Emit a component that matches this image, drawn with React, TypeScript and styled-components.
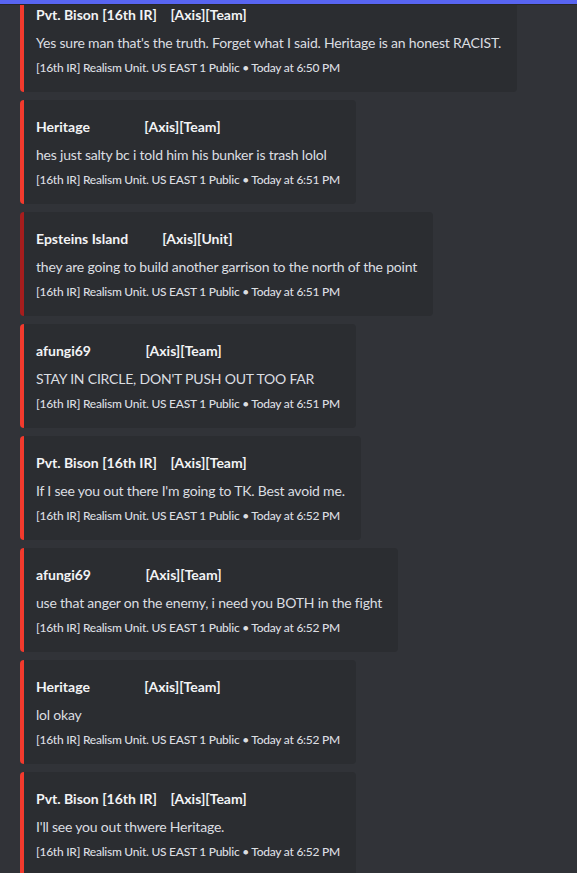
import React from "react";
import styled, { createGlobalStyle } from "styled-components";

const Global = createGlobalStyle`
  html, body { margin: 0; padding: 0; background: #313338; }
  body { overflow: hidden; font-family: Lato, "Noto Sans", sans-serif; }
`;

const Page = styled.div`
  position: relative;
  height: 873px;
  overflow: hidden;
  background: #313338;
`;

const TopBar = styled.div`
  position: absolute;
  top: 0;
  left: 0;
  right: 0;
  height: 4px;
  background: #5865f2;
  border-bottom: 1px solid #26272b;
  z-index: 2;
`;

const List = styled.div`
  display: flex;
  flex-direction: column;
  align-items: flex-start;
  gap: 8px;
  margin-top: -12px;
  padding-left: 20px;
`;

const Embed = styled.div<{ $accent: string }>`
  display: grid;
  row-gap: 8px;
  padding: 16px 16px 16px 12px;
  background: #2b2d31;
  border-left: 4px solid ${(p) => p.$accent};
  border-radius: 4px;
`;

const Title = styled.div`
  font-size: 14px;
  line-height: 22px;
  font-weight: 700;
  color: #f2f3f5;
  white-space: pre;
`;

const Description = styled.div`
  font-size: 14px;
  line-height: 18px;
  letter-spacing: -0.2px;
  color: #dbdee1;
  white-space: pre-wrap;
`;

const Footer = styled.div`
  font-size: 12px;
  line-height: 16px;
  font-weight: 500;
  letter-spacing: -0.25px;
  color: #dbdee1;
`;

type Msg = {
  name: string;
  pad: number;
  tag: string;
  text: string;
  time: string;
  accent?: string;
};

const RED = "#f23a2d";
const DARK = "#a61d1d";

const msgs: Msg[] = [
  { name: "Pvt. Bison [16th IR]", pad: 4, tag: "[Axis][Team]", text: "Yes sure man that's the truth. Forget what I said. Heritage is an honest RACIST.", time: "6:50 PM" },
  { name: "Heritage", pad: 16, tag: "[Axis][Team]", text: "hes just salty bc i told him his bunker is trash lolol", time: "6:51 PM" },
  { name: "Epsteins Island", pad: 10, tag: "[Axis][Unit]", text: "they are going to build another garrison to the north of the point", time: "6:51 PM", accent: DARK },
  { name: "afungi69", pad: 16, tag: "[Axis][Team]", text: "STAY IN CIRCLE, DON'T PUSH OUT TOO FAR", time: "6:51 PM" },
  { name: "Pvt. Bison [16th IR]", pad: 4, tag: "[Axis][Team]", text: "If I see you out there I'm going to TK. Best avoid me.", time: "6:52 PM" },
  { name: "afungi69", pad: 16, tag: "[Axis][Team]", text: "use that anger on the enemy, i need you BOTH in the fight", time: "6:52 PM" },
  { name: "Heritage", pad: 16, tag: "[Axis][Team]", text: "lol okay", time: "6:52 PM" },
  { name: "Pvt. Bison [16th IR]", pad: 4, tag: "[Axis][Team]", text: "I'll see you out thwere Heritage.", time: "6:52 PM" },
];

export default function App() {
  return (
    <Page>
      <Global />
      <TopBar />
      <List>
        {msgs.map((m, i) => (
          <Embed key={i} $accent={m.accent ?? RED}>
            <Title>{m.name + " ".repeat(m.pad) + m.tag}</Title>
            <Description>{m.text}</Description>
            <Footer>[16th IR] Realism Unit. US EAST 1 Public • Today at {m.time}</Footer>
          </Embed>
        ))}
      </List>
    </Page>
  );
}
